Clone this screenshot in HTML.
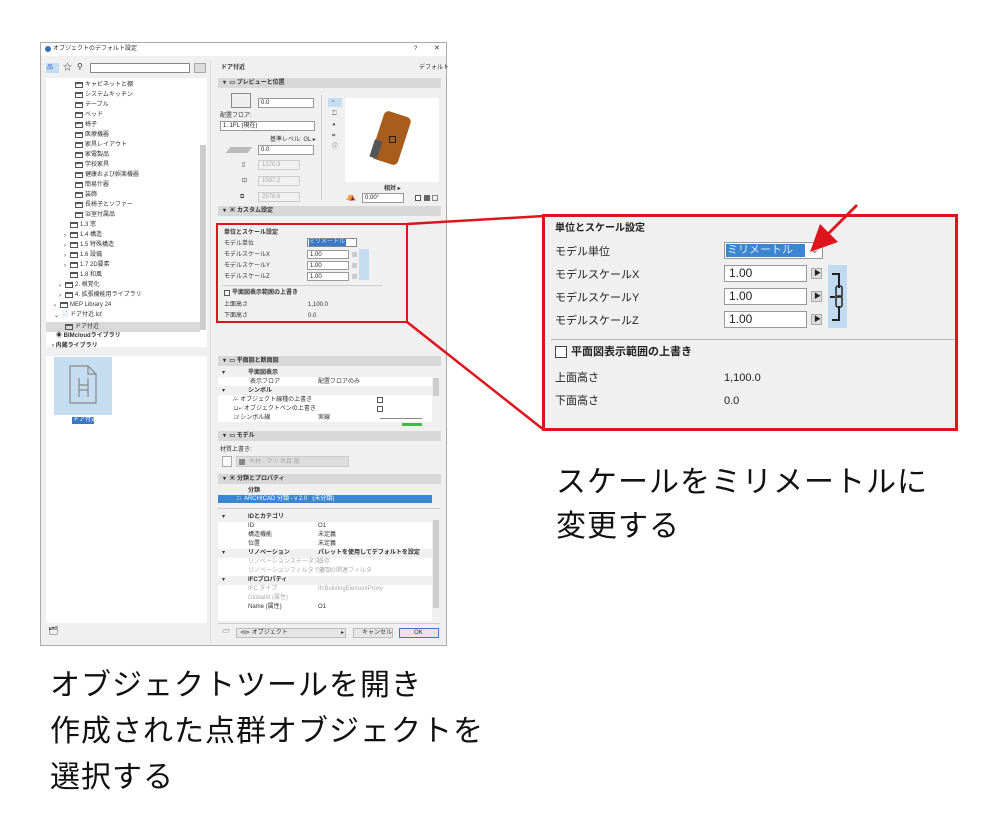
<!DOCTYPE html>
<html><head><meta charset="utf-8">
<style>
*{margin:0;padding:0;box-sizing:border-box}
body{width:999px;height:840px;background:#fff;position:relative;overflow:hidden;font-family:"Liberation Sans","Noto Sans CJK JP",sans-serif;color:#222}
.a{position:absolute}
.t{position:absolute;font-size:6px;line-height:8px;white-space:nowrap;color:#333}
.b{font-weight:bold}
.g{color:#aaa}
.sec{position:absolute;left:218px;width:223px;height:10px;background:#d8d8d8;font-size:6px;line-height:10px;padding-left:5px;font-weight:bold;color:#333}
.fold{position:absolute;width:8px;height:6px;border:1px solid #555;border-top-width:2px}
.inp{position:absolute;background:#fff;border:1px solid #999;font-size:6px;line-height:8px;padding-left:2px}
.gi{position:absolute;border:1px solid #ccc;background:#f0f0f0;font-size:6px;line-height:8px;padding-left:3px;color:#aaa}
.big{position:absolute;font-size:30px;letter-spacing:1px;line-height:34px;color:#111;white-space:nowrap}
.row{position:absolute;left:218px;width:214px;height:9px;background:#fff}
.ct{font-size:11px;line-height:14px;position:absolute;white-space:nowrap;color:#222}
</style></head><body>

<div class="a" style="left:40px;top:42px;width:407px;height:604px;background:#f0f0f0;border:1px solid #aaa"></div>
<div class="a" style="left:41px;top:43px;width:405px;height:13px;background:#fff"></div>
<div class="a" style="left:45px;top:46px;width:6px;height:6px;border-radius:50%;background:#3a6fb5"></div>
<div class="t" style="left:53px;top:45px">オブジェクトのデフォルト設定</div>
<div class="t" style="left:414px;top:45px">?</div>
<div class="t" style="left:434px;top:45px;font-size:7px">✕</div>

<div class="a" style="left:46px;top:63px;width:13px;height:10px;background:#c5ddf2"></div>
<div class="t" style="left:47px;top:64px;color:#36c">品</div>
<div class="t" style="left:63px;top:63px;font-size:9px">☆</div>
<div class="t" style="left:77px;top:63px;font-size:8px">⚲</div>
<div class="a" style="left:90px;top:63px;width:100px;height:10px;background:#fff;border:1px solid #888"></div>
<div class="a" style="left:194px;top:63px;width:12px;height:10px;background:#ddd;border:1px solid #aaa"></div>

<div class="a" style="left:46px;top:78px;width:161px;height:269px;background:#fff"></div>
<div class="a" style="left:200px;top:145px;width:6px;height:185px;background:#cdcdcd"></div>
<div class="a" style="left:46px;top:322px;width:154px;height:10px;background:#d9d9d9"></div>

<div class="fold" style="left:75px;top:82px"></div><div class="t" style="left:85px;top:81px">キャビネットと棚</div>
<div class="fold" style="left:75px;top:92px"></div><div class="t" style="left:85px;top:91px">システムキッチン</div>
<div class="fold" style="left:75px;top:102px"></div><div class="t" style="left:85px;top:101px">テーブル</div>
<div class="fold" style="left:75px;top:112px"></div><div class="t" style="left:85px;top:111px">ベッド</div>
<div class="fold" style="left:75px;top:122px"></div><div class="t" style="left:85px;top:121px">椅子</div>
<div class="fold" style="left:75px;top:132px"></div><div class="t" style="left:85px;top:131px">医療機器</div>
<div class="fold" style="left:75px;top:142px"></div><div class="t" style="left:85px;top:141px">家具レイアウト</div>
<div class="fold" style="left:75px;top:152px"></div><div class="t" style="left:85px;top:151px">家電製品</div>
<div class="fold" style="left:75px;top:162px"></div><div class="t" style="left:85px;top:161px">学校家具</div>
<div class="fold" style="left:75px;top:172px"></div><div class="t" style="left:85px;top:171px">健康および娯楽機器</div>
<div class="fold" style="left:75px;top:182px"></div><div class="t" style="left:85px;top:181px">簡易什器</div>
<div class="fold" style="left:75px;top:192px"></div><div class="t" style="left:85px;top:191px">装飾</div>
<div class="fold" style="left:75px;top:202px"></div><div class="t" style="left:85px;top:201px">長椅子とソファー</div>
<div class="fold" style="left:75px;top:212px"></div><div class="t" style="left:85px;top:211px">浴室付属品</div>
<div class="fold" style="left:70px;top:222px"></div><div class="t" style="left:80px;top:221px">1.3 窓</div>
<div class="t" style="left:64px;top:232px">›</div><div class="fold" style="left:70px;top:232px"></div><div class="t" style="left:80px;top:231px">1.4 構造</div>
<div class="t" style="left:64px;top:242px">›</div><div class="fold" style="left:70px;top:242px"></div><div class="t" style="left:80px;top:241px">1.5 特殊構造</div>
<div class="t" style="left:64px;top:252px">›</div><div class="fold" style="left:70px;top:252px"></div><div class="t" style="left:80px;top:251px">1.6 設備</div>
<div class="t" style="left:64px;top:262px">›</div><div class="fold" style="left:70px;top:262px"></div><div class="t" style="left:80px;top:261px">1.7 2D要素</div>
<div class="fold" style="left:70px;top:272px"></div><div class="t" style="left:80px;top:271px">1.8 和風</div>
<div class="t" style="left:59px;top:282px">›</div><div class="fold" style="left:65px;top:282px"></div><div class="t" style="left:75px;top:281px">2. 視覚化</div>
<div class="t" style="left:59px;top:292px">›</div><div class="fold" style="left:65px;top:292px"></div><div class="t" style="left:75px;top:291px">4. 拡張機能用ライブラリ</div>
<div class="t" style="left:54px;top:302px">›</div><div class="fold" style="left:60px;top:302px"></div><div class="t" style="left:70px;top:301px">MEP Library 24</div>
<div class="t" style="left:54px;top:312px">⌄</div><div class="t" style="left:61px;top:311px">📄</div><div class="t" style="left:70px;top:311px">ドア付近.lcf</div>
<div class="fold" style="left:65px;top:324px"></div><div class="t" style="left:75px;top:323px">ドア付近</div>
<div class="t b" style="left:56px;top:332px">◉ BIMcloudライブラリ</div>
<div class="t b" style="left:52px;top:342px">› 内蔵ライブラリ</div>

<div class="a" style="left:46px;top:356px;width:161px;height:267px;background:#fff"></div>
<div class="a" style="left:54px;top:357px;width:58px;height:58px;background:#c6dcf1"></div>
<svg class="a" style="left:67px;top:364px" width="32" height="42" viewBox="0 0 32 42"><path d="M3 2h18l8 8v29H3z M21 2v8h8" fill="none" stroke="#888" stroke-width="1.2"/><path d="M12 14v12h9v-12 M12 26v7 M21 26v7 M12 21h9" fill="none" stroke="#888" stroke-width="1.2"/></svg>
<div class="a" style="left:72px;top:417px;width:22px;height:7px;background:#3a78c6"></div>
<div class="t" style="left:73px;top:416px;color:#fff">ドア付近</div>
<div class="t" style="left:48px;top:627px;font-size:8px">🗂</div>

<div class="a" style="left:210px;top:60px;width:1px;height:583px;background:#ddd"></div>
<div class="t b" style="left:221px;top:64px">ドア付近</div>
<div class="t" style="left:419px;top:64px">デフォルト</div>

<div class="sec" style="top:78px">▾ &nbsp;▭ プレビューと位置</div>
<div class="a" style="left:231px;top:93px;width:20px;height:15px;border:1px solid #888;background:#eee"></div>
<div class="inp" style="left:258px;top:98px;width:56px;height:10px">0.0</div>
<div class="t" style="left:220px;top:112px">配置フロア:</div>
<div class="inp" style="left:220px;top:121px;width:95px;height:10px">1. 1FL (現在)</div>
<div class="t" style="left:270px;top:136px">基準レベル: GL ▸</div>
<div class="a" style="left:228px;top:147px;width:22px;height:6px;background:#bbb;transform:skewX(-40deg)"></div>
<div class="inp" style="left:258px;top:145px;width:56px;height:10px">0.0</div>
<div class="gi" style="left:258px;top:160px;width:42px;height:10px">1270.3</div>
<div class="gi" style="left:258px;top:176px;width:42px;height:10px">1597.2</div>
<div class="gi" style="left:258px;top:192px;width:42px;height:10px">2578.6</div>
<div class="t" style="left:242px;top:161px">▯</div><div class="t" style="left:242px;top:177px">⊡</div><div class="t" style="left:240px;top:193px">⧉</div>
<div class="a" style="left:321px;top:95px;width:1px;height:105px;background:#ccc"></div>
<div class="a" style="left:328px;top:98px;width:14px;height:9px;background:#c6dcf1"></div>
<div class="t" style="left:332px;top:98px">▫</div>
<div class="t" style="left:332px;top:110px">⏍</div>
<div class="t" style="left:332px;top:121px">◕</div>
<div class="t" style="left:332px;top:132px">⌗</div>
<div class="t" style="left:332px;top:143px">ⓘ</div>
<div class="a" style="left:345px;top:98px;width:94px;height:84px;background:#fff"></div>
<div class="a" style="left:377px;top:113px;width:28px;height:50px;background:#a85d1c;border-radius:5px;transform:rotate(18deg)"></div>
<div class="a" style="left:372px;top:140px;width:8px;height:18px;background:#555;transform:rotate(18deg)"></div>
<div class="a" style="left:389px;top:136px;width:7px;height:7px;border:1px solid #222"></div>
<div class="t b" style="left:384px;top:185px">相対 ▸</div>
<div class="t" style="left:346px;top:193px;font-size:8px">⛺</div>
<div class="inp" style="left:362px;top:193px;width:42px;height:10px">0.00°</div>
<div class="a" style="left:415px;top:195px;width:6px;height:6px;border:1px solid #555;background:#fff"></div>
<div class="a" style="left:424px;top:195px;width:6px;height:6px;background:#666"></div>
<div class="a" style="left:432px;top:195px;width:6px;height:6px;border:1px solid #888"></div>

<div class="sec" style="top:206px">▾ &nbsp;▣ カスタム設定</div>
<div class="t b" style="left:224px;top:229px">単位とスケール設定</div>
<div class="t" style="left:224px;top:240px">モデル単位</div>
<div class="a" style="left:307px;top:238px;width:50px;height:9px;background:#fff;border:1px solid #888"></div>
<div class="a" style="left:309px;top:239px;width:37px;height:7px;background:#3a78c6"></div>
<div class="t" style="left:309px;top:238px;color:#cde">ミリメートル</div>
<div class="t" style="left:224px;top:251px">モデルスケールX</div>
<div class="t" style="left:224px;top:262px">モデルスケールY</div>
<div class="t" style="left:224px;top:273px">モデルスケールZ</div>
<div class="inp" style="left:307px;top:250px;width:42px;height:9px">1.00</div>
<div class="inp" style="left:307px;top:261px;width:42px;height:9px">1.00</div>
<div class="inp" style="left:307px;top:272px;width:42px;height:9px">1.00</div>
<div class="a" style="left:352px;top:252px;width:5px;height:5px;background:#ccc"></div>
<div class="a" style="left:352px;top:263px;width:5px;height:5px;background:#ccc"></div>
<div class="a" style="left:352px;top:274px;width:5px;height:5px;background:#ccc"></div>
<div class="a" style="left:359px;top:249px;width:10px;height:31px;background:#c6dcf1"></div>
<div class="a" style="left:222px;top:285px;width:160px;height:1px;background:#ccc"></div>
<div class="a" style="left:224px;top:290px;width:6px;height:6px;border:1px solid #555;background:#fff"></div>
<div class="t b" style="left:232px;top:289px">平面図表示範囲の上書き</div>
<div class="t" style="left:224px;top:301px">上面高さ</div><div class="t" style="left:308px;top:301px">1,100.0</div>
<div class="t" style="left:224px;top:312px">下面高さ</div><div class="t" style="left:308px;top:312px">0.0</div>

<div class="sec" style="top:356px">▾ &nbsp;▭ 平面図と断面図</div>
<div class="row" style="top:377px"></div>
<div class="row" style="top:395px"></div><div class="row" style="top:404px"></div><div class="row" style="top:413px"></div>
<div class="a" style="left:433px;top:378px;width:6px;height:18px;background:#cdcdcd"></div>
<div class="t" style="left:222px;top:369px">▾</div><div class="t b" style="left:248px;top:369px">平面図表示</div>
<div class="t" style="left:250px;top:378px">表示フロア</div><div class="t" style="left:318px;top:378px">配置フロアのみ</div>
<div class="t" style="left:222px;top:387px">▾</div><div class="t b" style="left:248px;top:387px">シンボル</div>
<div class="t" style="left:234px;top:396px">⁄⌐ オブジェクト線種の上書き</div>
<div class="t" style="left:234px;top:405px">⊔⌐ オブジェクトペンの上書き</div>
<div class="t" style="left:234px;top:414px">□⁄ シンボル線</div><div class="t" style="left:318px;top:414px">実線</div>
<div class="a" style="left:377px;top:397px;width:6px;height:6px;border:1px solid #555"></div>
<div class="a" style="left:377px;top:406px;width:6px;height:6px;border:1px solid #555"></div>
<div class="a" style="left:380px;top:418px;width:42px;height:1px;background:#888"></div>
<div class="a" style="left:402px;top:423px;width:20px;height:3px;background:#4b4"></div>

<div class="sec" style="top:431px">▾ &nbsp;▭ モデル</div>
<div class="t" style="left:220px;top:446px">材質上書き:</div>
<div class="a" style="left:222px;top:456px;width:10px;height:11px;border:1px solid #aaa;background:#fafafa"></div>
<div class="a" style="left:236px;top:456px;width:113px;height:11px;background:#ddd;border:1px solid #ccc"></div>
<div class="a" style="left:239px;top:459px;width:6px;height:6px;background:#888"></div>
<div class="t g" style="left:249px;top:458px">木材 - マツ 木目 縦</div>

<div class="sec" style="top:474px">▾ &nbsp;▣ 分類とプロパティ</div>
<div class="t b" style="left:248px;top:487px">分類</div>
<div class="a" style="left:218px;top:495px;width:214px;height:8px;background:#3a86d0"></div>
<div class="t" style="left:237px;top:495px;color:#fff">□ &nbsp;ARCHICAD 分類 - v 2.0 &nbsp;&nbsp;(未分類)</div>
<div class="a" style="left:218px;top:508px;width:222px;height:1px;background:#ccc"></div>

<div class="row" style="top:522px"></div><div class="row" style="top:531px"></div><div class="row" style="top:540px"></div>
<div class="row" style="top:558px"></div><div class="row" style="top:567px"></div>
<div class="row" style="top:585px"></div><div class="row" style="top:594px"></div><div class="row" style="top:603px"></div><div class="row" style="top:612px"></div>
<div class="a" style="left:433px;top:520px;width:6px;height:88px;background:#cdcdcd"></div>
<div class="t" style="left:222px;top:513px">▾</div><div class="t b" style="left:248px;top:513px">IDとカテゴリ</div>
<div class="t" style="left:248px;top:522px">ID</div><div class="t" style="left:318px;top:522px">O1</div>
<div class="t" style="left:248px;top:531px">構造機能</div><div class="t" style="left:318px;top:531px">未定義</div>
<div class="t" style="left:248px;top:540px">位置</div><div class="t" style="left:318px;top:540px">未定義</div>
<div class="t" style="left:222px;top:549px">▾</div><div class="t b" style="left:248px;top:549px">リノベーション</div><div class="t b" style="left:318px;top:549px">パレットを使用してデフォルトを設定</div>
<div class="t g" style="left:248px;top:558px">リノベーションステータス</div><div class="t g" style="left:318px;top:558px">既存</div>
<div class="t g" style="left:248px;top:567px">リノベーションフィルタで表示</div><div class="t g" style="left:318px;top:567px">全ての関連フィルタ</div>
<div class="t" style="left:222px;top:576px">▾</div><div class="t b" style="left:248px;top:576px">IFCプロパティ</div>
<div class="t g" style="left:248px;top:585px">IFC タイプ</div><div class="t g" style="left:318px;top:585px">IfcBuildingElementProxy</div>
<div class="t g" style="left:248px;top:594px">GlobalId (属性)</div>
<div class="t" style="left:248px;top:603px">Name (属性)</div><div class="t" style="left:318px;top:603px">O1</div>

<div class="a" style="left:218px;top:623px;width:222px;height:1px;background:#ccc"></div>
<div class="t" style="left:222px;top:628px;font-size:8px;color:#666">▱</div>
<div class="a" style="left:236px;top:628px;width:110px;height:10px;background:#e6e6e6;border:1px solid #bbb"></div>
<div class="t" style="left:240px;top:629px">⊲⊳ オブジェクト</div><div class="t" style="left:341px;top:629px">▸</div>
<div class="a" style="left:353px;top:628px;width:40px;height:10px;background:#e6e6e6;border:1px solid #bbb"></div>
<div class="t" style="left:362px;top:629px">キャンセル</div>
<div class="a" style="left:399px;top:628px;width:40px;height:10px;background:#e6e6e6;border:1px solid #3a78c6"></div>
<div class="t" style="left:414px;top:629px">OK</div>

<div class="a" style="left:216px;top:223px;width:192px;height:100px;border:2px solid #e0141c"></div>

<svg class="a" style="left:0;top:0" width="999" height="840">
<line x1="407" y1="224" x2="544" y2="216" stroke="#e0141c" stroke-width="2.5"/>
<line x1="407" y1="322" x2="544" y2="430" stroke="#e0141c" stroke-width="2.5"/>
</svg>

<div class="a" style="left:542px;top:214px;width:416px;height:217px;background:#f0f0f0;border:3px solid #e0141c"></div>
<div class="ct b" style="left:555px;top:222px;font-size:10px">単位とスケール設定</div>
<div class="ct" style="left:555px;top:245px">モデル単位</div>
<div class="ct" style="left:555px;top:268px">モデルスケールX</div>
<div class="ct" style="left:555px;top:291px">モデルスケールY</div>
<div class="ct" style="left:555px;top:314px">モデルスケールZ</div>
<div class="a" style="left:724px;top:242px;width:99px;height:17px;background:#fff;border:1px solid #999"></div>
<div class="a" style="left:726px;top:244px;width:79px;height:13px;background:#3a86d0"></div>
<div class="ct" style="left:727px;top:243px;color:#dde8f5">ミリメートル</div>
<div class="ct" style="left:810px;top:243px;color:#666">⌄</div>
<div class="a" style="left:724px;top:265px;width:83px;height:17px;background:#fff;border:1px solid #999"></div>
<div class="a" style="left:724px;top:288px;width:83px;height:17px;background:#fff;border:1px solid #999"></div>
<div class="a" style="left:724px;top:311px;width:83px;height:17px;background:#fff;border:1px solid #999"></div>
<div class="ct" style="left:729px;top:266px;font-size:12px">1.00</div>
<div class="ct" style="left:729px;top:289px;font-size:12px">1.00</div>
<div class="ct" style="left:729px;top:312px;font-size:12px">1.00</div>
<div class="a" style="left:811px;top:268px;width:11px;height:11px;background:#ddd;border:1px solid #aaa"></div>
<div class="a" style="left:811px;top:291px;width:11px;height:11px;background:#ddd;border:1px solid #aaa"></div>
<div class="a" style="left:811px;top:314px;width:11px;height:11px;background:#ddd;border:1px solid #aaa"></div>
<div class="ct" style="left:814px;top:267px;font-size:7px">▶</div>
<div class="ct" style="left:814px;top:290px;font-size:7px">▶</div>
<div class="ct" style="left:814px;top:313px;font-size:7px">▶</div>
<div class="a" style="left:828px;top:265px;width:19px;height:63px;background:#c2daf0"></div>
<svg class="a" style="left:828px;top:265px" width="19" height="63" viewBox="0 0 19 63"><path d="M4 9h7v14 M4 55h7v-14 M2 32h5" fill="none" stroke="#222" stroke-width="2"/><rect x="8" y="21" width="6" height="11" rx="2" fill="none" stroke="#222" stroke-width="1.5"/><rect x="8" y="31" width="6" height="11" rx="2" fill="none" stroke="#222" stroke-width="1.5"/></svg>
<div class="a" style="left:551px;top:339px;width:404px;height:1px;background:#bbb"></div>
<div class="a" style="left:555px;top:346px;width:12px;height:12px;border:1px solid #444;background:#fff"></div>
<div class="ct b" style="left:571px;top:345px">平面図表示範囲の上書き</div>
<div class="ct" style="left:555px;top:371px">上面高さ</div><div class="ct" style="left:724px;top:371px">1,100.0</div>
<div class="ct" style="left:555px;top:394px">下面高さ</div><div class="ct" style="left:724px;top:394px">0.0</div>

<svg class="a" style="left:800px;top:200px" width="70" height="60"><path d="M58 6 L30 34 L38 42 L10 52 L20 24 L28 32 L56 4 Z" fill="#e0141c"/></svg>

<div class="big" style="left:556px;top:466px">スケールをミリメートルに</div>
<div class="big" style="left:556px;top:510px">変更する</div>
<div class="big" style="left:50px;top:669px">オブジェクトツールを開き</div>
<div class="big" style="left:50px;top:715px">作成された点群オブジェクトを</div>
<div class="big" style="left:50px;top:761px">選択する</div>
</body></html>
